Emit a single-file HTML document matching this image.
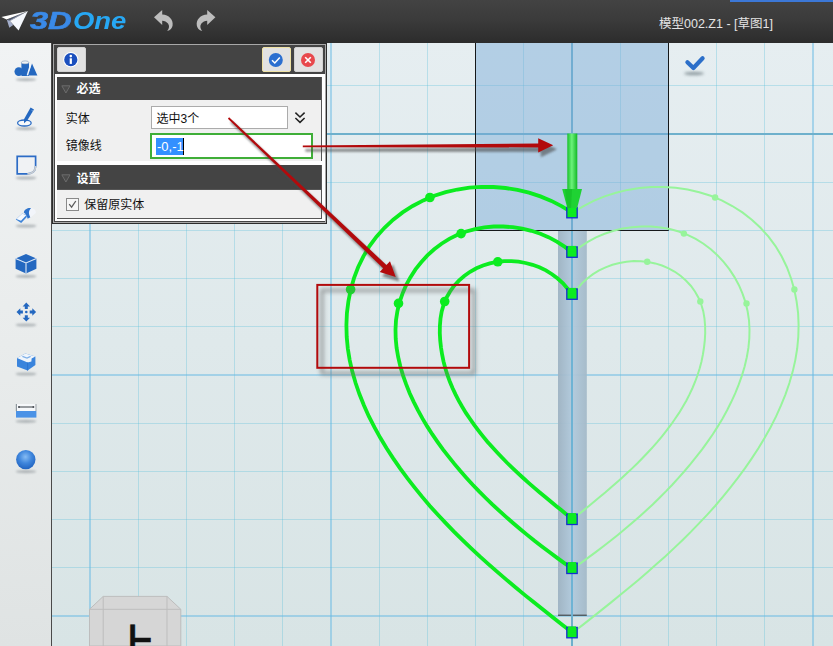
<!DOCTYPE html>
<html lang="zh-CN">
<head>
<meta charset="utf-8">
<title>模型002.Z1 - [草图1]</title>
<style>
html,body{margin:0;padding:0;}
body{width:833px;height:646px;overflow:hidden;position:relative;background:#e3ecef;font-family:"Liberation Sans","Noto Sans CJK SC",sans-serif;font-size:12px;color:#111;}
#hdr{position:absolute;left:0;top:0;width:833px;height:43px;background:linear-gradient(#434343 0,#3b3b3b 45%,#2c2c2c 100%);}
#hdr .bluebar{position:absolute;left:730px;top:0;width:103px;height:1.6px;background:#3c78d7;}
#title{position:absolute;left:659px;top:15px;font-size:12.5px;line-height:18px;color:#e4e4e4;white-space:nowrap;letter-spacing:0;}
#logo{position:absolute;left:0;top:0;font-family:"Liberation Sans",sans-serif;font-weight:bold;font-style:italic;font-size:24.5px;line-height:28px;white-space:nowrap;}
#logo span{position:absolute;top:6.5px;transform-origin:0 50%;display:block;}
#logo .a{color:#3a8ae8;left:29.5px;transform:scaleX(1.33);-webkit-text-stroke:0.6px #3a8ae8;}
#logo .b{color:#27a8f4;left:73px;transform:scaleX(1.12);}
#side{position:absolute;left:0;top:43px;width:51px;height:603px;background:linear-gradient(#f1f3f4,#e9ecec 50%,#dfe3e3);border-right:1px solid #4a4a4a;}
#panel{position:absolute;left:0;top:0;width:0;height:0;}
.pb{position:absolute;}
.tbtn{position:absolute;width:29px;height:25.3px;background:#e2e2e2;border-radius:2px;box-sizing:border-box;border:1px solid #d2d2d2;}
.lbl{position:absolute;font-size:12px;line-height:16px;color:#111;white-space:nowrap;}
.lbl.hd{color:#fff;font-weight:bold;}
</style>
</head>
<body>
<svg id="cv" width="833" height="646" viewBox="0 0 833 646" style="position:absolute;left:0;top:0">
<defs>
<linearGradient id="bg" x1="0" x2="0" y1="0" y2="1"><stop offset="0.06" stop-color="#e6eef1"/><stop offset="1" stop-color="#d8e4e5"/></linearGradient>
<linearGradient id="bar" x1="0" x2="1" y1="0" y2="0"><stop offset="0" stop-color="#9db2c2"/><stop offset="0.5" stop-color="#b0c9dc"/><stop offset="1" stop-color="#a3b9c8"/></linearGradient>
<linearGradient id="shaft" x1="0" x2="1" y1="0" y2="0"><stop offset="0" stop-color="#19c22c"/><stop offset="0.45" stop-color="#6cf27a"/><stop offset="1" stop-color="#12b825"/></linearGradient>
<filter id="sh" x="-20%" y="-20%" width="140%" height="140%"><feGaussianBlur stdDeviation="1.6"/></filter>
<filter id="sh4" x="-20%" y="-20%" width="140%" height="140%"><feGaussianBlur stdDeviation="2.1"/></filter>
<filter id="sh2" x="-50%" y="-100%" width="200%" height="300%"><feGaussianBlur stdDeviation="1.4"/></filter>
</defs>
<rect x="0" y="0" width="833" height="646" fill="url(#bg)"/>
<rect x="89" y="43" width="2" height="603" fill="rgba(104,186,228,0.50)"/>
<rect x="138" y="43" width="1" height="603" fill="rgba(92,192,220,0.33)"/>
<rect x="186" y="43" width="1" height="603" fill="rgba(92,192,220,0.33)"/>
<rect x="234" y="43" width="1" height="603" fill="rgba(92,192,220,0.33)"/>
<rect x="282" y="43" width="1" height="603" fill="rgba(92,192,220,0.33)"/>
<rect x="330" y="43" width="2" height="603" fill="rgba(104,186,228,0.50)"/>
<rect x="379" y="43" width="1" height="603" fill="rgba(92,192,220,0.33)"/>
<rect x="427" y="43" width="1" height="603" fill="rgba(92,192,220,0.33)"/>
<rect x="475" y="43" width="1" height="603" fill="rgba(92,192,220,0.33)"/>
<rect x="523" y="43" width="1" height="603" fill="rgba(92,192,220,0.33)"/>
<rect x="571" y="43" width="2" height="603" fill="#6eb0cc"/>
<rect x="620" y="43" width="1" height="603" fill="rgba(92,192,220,0.33)"/>
<rect x="668" y="43" width="1" height="603" fill="rgba(92,192,220,0.33)"/>
<rect x="716" y="43" width="1" height="603" fill="rgba(92,192,220,0.33)"/>
<rect x="764" y="43" width="1" height="603" fill="rgba(92,192,220,0.33)"/>
<rect x="812" y="43" width="2" height="603" fill="rgba(104,186,228,0.50)"/>
<rect x="52" y="85" width="781" height="1" fill="rgba(92,192,220,0.33)"/>
<rect x="52" y="133" width="781" height="2" fill="#6eb0cc"/>
<rect x="52" y="182" width="781" height="1" fill="rgba(92,192,220,0.33)"/>
<rect x="52" y="230" width="781" height="1" fill="rgba(92,192,220,0.33)"/>
<rect x="52" y="278" width="781" height="1" fill="rgba(92,192,220,0.33)"/>
<rect x="52" y="326" width="781" height="1" fill="rgba(92,192,220,0.33)"/>
<rect x="52" y="374" width="781" height="2" fill="rgba(104,186,228,0.50)"/>
<rect x="52" y="423" width="781" height="1" fill="rgba(92,192,220,0.33)"/>
<rect x="52" y="471" width="781" height="1" fill="rgba(92,192,220,0.33)"/>
<rect x="52" y="519" width="781" height="1" fill="rgba(92,192,220,0.33)"/>
<rect x="52" y="567" width="781" height="1" fill="rgba(92,192,220,0.33)"/>
<rect x="52" y="615" width="781" height="2" fill="rgba(104,186,228,0.50)"/>
<!-- selection box -->
<rect x="475" y="43" width="194" height="188" fill="rgba(120,170,215,0.46)"/>
<path d="M475.5 43 V230.5 H668.5 V43" fill="none" stroke="#15181a" stroke-width="1"/>
<!-- bar -->
<rect x="558" y="231" width="28.8" height="384.5" fill="url(#bar)" opacity="0.94"/>
<rect x="558" y="614.7" width="28.8" height="1" fill="#333"/>
<rect x="571.0" y="231" width="2" height="385" fill="#6ab2d4" opacity="0.95"/>
<g transform="translate(1,0)">
<path d="M572.0 212.5 L582.1 206.3 L592.6 200.9 L603.6 196.4 L615.0 192.7 L626.6 189.9 L638.5 188.0 L650.5 187.0 L662.6 186.9 L674.6 187.7 L686.6 189.5 L698.3 192.2 L709.7 195.8 L720.7 200.4 L731.3 206.0 L741.4 212.4 L750.8 219.7 L759.5 227.8 L767.5 236.6 L774.5 246.1 L780.6 256.3 L785.8 267.0 L790.0 278.2 L793.3 289.6 L795.6 301.4 L797.1 313.2 L797.6 325.0 L797.3 336.8 L796.2 348.5 L794.3 360.1 L791.7 371.6 L788.4 383.0 L784.5 394.3 L780.0 405.4 L775.1 416.4 L769.6 427.2 L763.7 437.8 L757.4 448.2 L750.8 458.4 L743.9 468.4 L736.7 478.2 L729.3 487.6 L721.8 496.9 L714.1 506.0 L706.1 514.8 L698.0 523.4 L689.8 531.9 L681.4 540.2 L672.8 548.4 L664.2 556.4 L655.3 564.3 L646.4 572.2 L637.4 579.9 L628.3 587.5 L619.1 595.1 L609.8 602.6 L600.4 610.1 L591.0 617.6 L581.5 625.1 L572.0 632.3" fill="none" stroke="#97f49b" stroke-width="2"/>
<path d="M572.0 252.5 L579.1 246.9 L586.8 241.8 L595.0 237.4 L603.6 233.8 L612.6 230.8 L621.8 228.6 L631.2 227.2 L640.7 226.5 L650.2 226.5 L659.6 227.4 L668.8 229.1 L677.8 231.5 L686.5 234.8 L694.7 238.9 L702.5 243.7 L709.8 249.3 L716.6 255.4 L722.8 262.2 L728.5 269.4 L733.5 277.1 L737.9 285.2 L741.5 293.6 L744.5 302.3 L746.6 311.2 L748.0 320.3 L748.5 329.5 L748.3 338.7 L747.4 347.9 L745.8 357.2 L743.7 366.3 L741.0 375.4 L737.8 384.4 L734.3 393.2 L730.3 401.8 L726.1 410.2 L721.6 418.4 L716.8 426.4 L711.8 434.2 L706.5 441.9 L701.1 449.4 L695.4 456.7 L689.6 463.9 L683.6 471.0 L677.5 477.9 L671.3 484.7 L664.9 491.4 L658.3 498.0 L651.7 504.4 L644.9 510.7 L638.0 516.9 L631.0 523.0 L623.9 529.0 L616.8 534.9 L609.5 540.8 L602.1 546.5 L594.7 552.1 L587.2 557.6 L579.7 563.1 L572.0 568.3" fill="none" stroke="#97f49b" stroke-width="2"/>
<path d="M572.0 294.5 L576.4 288.8 L581.0 283.3 L586.3 278.5 L592.0 274.2 L598.1 270.4 L604.6 267.3 L611.4 264.8 L618.4 263.0 L625.5 261.7 L632.7 261.1 L640.0 261.2 L647.1 262.0 L654.2 263.4 L661.0 265.5 L667.6 268.3 L673.9 271.8 L679.8 276.0 L685.1 280.7 L690.0 286.0 L694.1 291.7 L697.6 297.9 L700.3 304.5 L702.3 311.4 L703.5 318.5 L704.1 325.8 L704.2 333.1 L703.8 340.3 L703.0 347.5 L701.9 354.5 L700.5 361.4 L698.7 368.3 L696.6 375.0 L694.2 381.5 L691.5 388.0 L688.5 394.4 L685.3 400.7 L681.8 406.8 L678.1 412.9 L674.1 418.8 L670.0 424.7 L665.7 430.4 L661.2 436.1 L656.6 441.7 L651.8 447.1 L646.8 452.5 L641.8 457.8 L636.7 463.0 L631.4 468.1 L626.1 473.1 L620.8 478.0 L615.4 482.8 L609.9 487.6 L604.5 492.3 L599.0 496.8 L593.6 501.3 L588.2 505.8 L582.8 510.1 L577.5 514.4 L572.0 519.3" fill="none" stroke="#97f49b" stroke-width="2"/>
<circle cx="714.1" cy="197.5" r="3.2" fill="#97f49b"/>
<circle cx="793.4" cy="289.5" r="3.2" fill="#97f49b"/>
<circle cx="682.9" cy="233.6" r="3.2" fill="#97f49b"/>
<circle cx="745.5" cy="303.4" r="3.2" fill="#97f49b"/>
<circle cx="646.2" cy="261.8" r="3.2" fill="#97f49b"/>
<circle cx="699.3" cy="301.5" r="3.2" fill="#97f49b"/>
</g>
<path d="M572.0 212.5 L561.9 206.3 L551.4 200.9 L540.4 196.4 L529.0 192.7 L517.4 189.9 L505.5 188.0 L493.5 187.0 L481.4 186.9 L469.4 187.7 L457.4 189.5 L445.7 192.2 L434.3 195.8 L423.3 200.4 L412.7 206.0 L402.6 212.4 L393.2 219.7 L384.5 227.8 L376.5 236.6 L369.5 246.1 L363.4 256.3 L358.2 267.0 L354.0 278.2 L350.7 289.6 L348.4 301.4 L346.9 313.2 L346.4 325.0 L346.7 336.8 L347.8 348.5 L349.7 360.1 L352.3 371.6 L355.6 383.0 L359.5 394.3 L364.0 405.4 L368.9 416.4 L374.4 427.2 L380.3 437.8 L386.6 448.2 L393.2 458.4 L400.1 468.4 L407.3 478.2 L414.7 487.6 L422.2 496.9 L429.9 506.0 L437.9 514.8 L446.0 523.4 L454.2 531.9 L462.6 540.2 L471.2 548.4 L479.8 556.4 L488.7 564.3 L497.6 572.2 L506.6 579.9 L515.7 587.5 L524.9 595.1 L534.2 602.6 L543.6 610.1 L553.0 617.6 L562.5 625.1 L572.0 632.3" fill="none" stroke="#0cec20" stroke-width="3.8" stroke-linecap="round"/>
<path d="M572.0 252.5 L564.9 246.9 L557.2 241.8 L549.0 237.4 L540.4 233.8 L531.4 230.8 L522.2 228.6 L512.8 227.2 L503.3 226.5 L493.8 226.5 L484.4 227.4 L475.2 229.1 L466.2 231.5 L457.5 234.8 L449.3 238.9 L441.5 243.7 L434.2 249.3 L427.4 255.4 L421.2 262.2 L415.5 269.4 L410.5 277.1 L406.1 285.2 L402.5 293.6 L399.5 302.3 L397.4 311.2 L396.0 320.3 L395.5 329.5 L395.7 338.7 L396.6 347.9 L398.2 357.2 L400.3 366.3 L403.0 375.4 L406.2 384.4 L409.7 393.2 L413.7 401.8 L417.9 410.2 L422.4 418.4 L427.2 426.4 L432.2 434.2 L437.5 441.9 L442.9 449.4 L448.6 456.7 L454.4 463.9 L460.4 471.0 L466.5 477.9 L472.7 484.7 L479.1 491.4 L485.7 498.0 L492.3 504.4 L499.1 510.7 L506.0 516.9 L513.0 523.0 L520.1 529.0 L527.2 534.9 L534.5 540.8 L541.9 546.5 L549.3 552.1 L556.8 557.6 L564.3 563.1 L572.0 568.3" fill="none" stroke="#0cec20" stroke-width="3.8" stroke-linecap="round"/>
<path d="M572.0 294.5 L567.6 288.8 L563.0 283.3 L557.7 278.5 L552.0 274.2 L545.9 270.4 L539.4 267.3 L532.6 264.8 L525.6 263.0 L518.5 261.7 L511.3 261.1 L504.0 261.2 L496.9 262.0 L489.8 263.4 L483.0 265.5 L476.4 268.3 L470.1 271.8 L464.2 276.0 L458.9 280.7 L454.0 286.0 L449.9 291.7 L446.4 297.9 L443.7 304.5 L441.7 311.4 L440.5 318.5 L439.9 325.8 L439.8 333.1 L440.2 340.3 L441.0 347.5 L442.1 354.5 L443.5 361.4 L445.3 368.3 L447.4 375.0 L449.8 381.5 L452.5 388.0 L455.5 394.4 L458.7 400.7 L462.2 406.8 L465.9 412.9 L469.9 418.8 L474.0 424.7 L478.3 430.4 L482.8 436.1 L487.4 441.7 L492.2 447.1 L497.2 452.5 L502.2 457.8 L507.3 463.0 L512.6 468.1 L517.9 473.1 L523.2 478.0 L528.6 482.8 L534.1 487.6 L539.5 492.3 L545.0 496.8 L550.4 501.3 L555.8 505.8 L561.2 510.1 L566.5 514.4 L572.0 519.3" fill="none" stroke="#0cec20" stroke-width="3.8" stroke-linecap="round"/>
<circle cx="429.9" cy="197.5" r="4.8" fill="#0cec20"/>
<circle cx="350.6" cy="289.5" r="4.8" fill="#0cec20"/>
<circle cx="461.1" cy="233.6" r="4.8" fill="#0cec20"/>
<circle cx="398.5" cy="303.4" r="4.8" fill="#0cec20"/>
<circle cx="497.8" cy="261.8" r="4.8" fill="#0cec20"/>
<circle cx="444.7" cy="301.5" r="4.8" fill="#0cec20"/>
<rect x="566.8" y="207.4" width="10.4" height="10.4" fill="#0cec20" stroke="#1530d0" stroke-width="1.3"/><rect x="568.0" y="206.4" width="8" height="6" fill="#0cec20"/>
<rect x="566.8" y="246.9" width="10.4" height="10.4" fill="#0cec20" stroke="#1530d0" stroke-width="1.3"/><rect x="568.0" y="245.9" width="8" height="6" fill="#0cec20"/>
<rect x="566.8" y="288.9" width="10.4" height="10.4" fill="#0cec20" stroke="#1530d0" stroke-width="1.3"/><rect x="568.0" y="287.9" width="8" height="6" fill="#0cec20"/>
<rect x="566.8" y="514.1" width="10.4" height="10.4" fill="#0cec20" stroke="#1530d0" stroke-width="1.3"/><rect x="568.0" y="513.1" width="8" height="6" fill="#0cec20"/>
<rect x="566.8" y="563.1" width="10.4" height="10.4" fill="#0cec20" stroke="#1530d0" stroke-width="1.3"/><rect x="568.0" y="562.1" width="8" height="6" fill="#0cec20"/>
<rect x="566.8" y="627.4" width="10.4" height="10.4" fill="#0cec20" stroke="#1530d0" stroke-width="1.3"/><rect x="568.0" y="626.4" width="8" height="6" fill="#0cec20"/>

<!-- green arrow -->
<rect x="567.3" y="133.5" width="10" height="56" fill="url(#shaft)"/>
<path d="M562.2 189 L582 189 L577.2 208 L567.3 208 Z" fill="#1fd233"/>
<path d="M565 189 L572 189 L571 208 L567.3 208 Z" fill="#12b825" opacity="0.55"/>

<!-- red rect -->
<rect x="322" y="290.4" width="152" height="83" fill="none" stroke="#6a6a6a" stroke-width="3.4" opacity="0.6" filter="url(#sh4)"/>
<rect x="317.3" y="284.9" width="151.8" height="82.9" fill="none" stroke="#b20a0c" stroke-width="2"/>
<!-- blue check -->
<ellipse cx="694" cy="73.5" rx="10" ry="1.8" fill="#7d8a90" filter="url(#sh2)" opacity="0.8"/>
<path d="M687.4 62.2 L693.4 68 L702.6 58.2" fill="none" stroke="#2c6fc9" stroke-width="4.2" stroke-linecap="round" stroke-linejoin="round"/>
<!-- view cube -->
<path d="M89.5 646 V609.3 L103.2 596.4 H167 L180.8 609.3 V646 Z" fill="#d6d6d6" stroke="#bdbdbd" stroke-width="1"/>
<path d="M89.5 609.3 H180.8 M103.2 596.4 V646 M167 596.4 V646" fill="none" stroke="#bdbdbd" stroke-width="1"/>
</svg>
<div id="hdr">
  <div class="bluebar"></div>
  <svg width="30" height="42" style="position:absolute;left:0;top:0" viewBox="0 0 30 42">
    <path d="M7 20.2 L26 11.8 L10 20.9 L13.2 25 L9.3 27.8 Z" fill="#a3aecb"/>
    <path d="M7.6 19.7 L24 12.2 L9 20.7 Z" fill="#4b5468"/>
    <path d="M1.4 17.1 L27.9 10.9 L6.6 19.4 Z" fill="#ffffff"/>
    <path d="M10 20.9 L27.9 10.9 L18.6 30.6 Z" fill="#f5f8fd"/>
  </svg>
  <div id="logo"><span class="a">3D</span><span class="b">One</span></div>
  <svg width="80" height="42" style="position:absolute;left:145px;top:0" viewBox="145 0 80 42">
    <path d="M154 17.2 L162.2 10 L162.2 14.6 C169 15 173.4 19.6 172.6 25.4 C172.2 28 170.4 30 167.2 31 C169.4 28.6 169.6 25.6 168 23.6 C166.6 21.8 164.6 21 162.2 20.8 L162.2 25 Z" fill="#bdbdbd"/>
    <path d="M215.4 17.2 L207.2 10 L207.2 14.6 C200.4 15 196 19.6 196.8 25.4 C197.2 28 199 30 202.2 31 C200 28.6 199.8 25.6 201.4 23.6 C202.8 21.8 204.8 21 207.2 20.8 L207.2 25 Z" fill="#bdbdbd"/>
  </svg>
  <div id="title">模型002.Z1 - [草图1]</div>
</div>
<div id="side">
<svg width="51" height="603" viewBox="0 43 51 603" style="position:absolute;left:0;top:0">
<defs>
<filter id="ib" x="-30%" y="-150%" width="160%" height="400%"><feGaussianBlur stdDeviation="1.3"/></filter>
<radialGradient id="sph" cx="0.48" cy="0.36" r="0.6"><stop offset="0" stop-color="#86bcf4"/><stop offset="0.55" stop-color="#3f86dc"/><stop offset="1" stop-color="#2568c4"/></radialGradient>
</defs>
<g fill="#8d9499" filter="url(#ib)" opacity="0.6">
<ellipse cx="26" cy="79.6" rx="10.5" ry="1.6"/>
<ellipse cx="26" cy="128.6" rx="10.5" ry="1.6"/>
<ellipse cx="26" cy="178" rx="10.5" ry="1.6"/>
<ellipse cx="26" cy="226" rx="10.5" ry="1.6"/>
<ellipse cx="26" cy="276.4" rx="10.5" ry="1.6"/>
<ellipse cx="26" cy="325" rx="10.5" ry="1.6"/>
<ellipse cx="26" cy="374" rx="10.5" ry="1.6"/>
<ellipse cx="26" cy="421.4" rx="10.5" ry="1.6"/>
<ellipse cx="26" cy="471.6" rx="10.5" ry="1.6"/>
</g>
<!-- 1 shapes -->
<g>
<circle cx="18.8" cy="71.6" r="4.3" fill="#2468c0"/>
<path d="M21.4 62.6 V76 H29 V62.6 Z" fill="#2468c0"/>
<ellipse cx="25.1" cy="62.4" rx="3.7" ry="1.5" fill="#eef2f6" stroke="#7f97b4" stroke-width="0.6"/>
<path d="M32 63.6 L37.4 75.6 H27.6 Z" fill="#2468c0"/>
<path d="M30.6 64.4 L27.4 75.4" stroke="#f2f6fb" stroke-width="1.5" fill="none"/>
</g>
<!-- 2 pen -->
<g>
<ellipse cx="24.4" cy="123" rx="6.8" ry="3" fill="#f7f9fb" stroke="#2a6cc4" stroke-width="1.3"/>
<path d="M30.6 107.6 L34 109.6 L27.2 120.6 L24 123.2 L24 119.2 Z" fill="#2468c0"/>
<path d="M31.6 110.4 L33 111.2" stroke="#9cc0ea" stroke-width="0.8"/>
</g>
<!-- 3 square -->
<g>
<path d="M17.2 156.4 H35.6 V166 Q35.4 173.6 27.4 173.8 H17.2 Z" fill="#f0f2f4" stroke="#2c6cc6" stroke-width="1.7"/>
<path d="M35.6 166 Q35.4 173.6 27.4 173.8" fill="none" stroke="#c8ccd0" stroke-width="1.8"/>
</g>
<!-- 4 eraser-ish -->
<g>
<path d="M15.8 219.4 L22.2 213.4 L26.6 215 L26.8 217 L21.2 223 Z" fill="#3d83d8"/>
<path d="M16.4 219 L22.2 213.6 L26.2 215.2 L21 220.8 Z" fill="#f6f9fd"/>
<path d="M23.8 212.4 C24.4 209.4 28 207.6 31 208.2 L30.4 217.2 L27.6 218.8 C27.2 216 26 214 23.8 212.4 Z" fill="#2f74cc"/>
<path d="M31 208.2 C34 208 36 210.2 35.8 213 L30.6 217.4 C28.2 214.4 28.4 210.4 31 208.2 Z" fill="#f2f5fa"/>
</g>
<!-- 5 cube -->
<g>
<path d="M26 254 L36.4 258.6 V268.8 L26 273.6 L15.6 268.8 V258.6 Z" fill="#2468c0"/>
<path d="M15.6 258.6 L26 263 L36.4 258.6 M26 263 V273.6" fill="none" stroke="#dfe9f6" stroke-width="1.1"/>
</g>
<!-- 6 move -->
<g fill="#2468c0">
<path d="M26.3 302.6 L30 306.4 H27.8 V309 H24.8 V306.4 H22.6 Z"/>
<path d="M26.3 321.6 L30 317.8 H27.8 V315.2 H24.8 V317.8 H22.6 Z"/>
<path d="M16.5 312 L20.3 308.3 V310.5 H22.9 V313.5 H20.3 V315.7 Z"/>
<path d="M36.1 312 L32.3 308.3 V310.5 H29.7 V313.5 H32.3 V315.7 Z"/>
<circle cx="26.3" cy="312" r="1.3"/>
</g>
<!-- 7 cube cut -->
<g>
<path d="M17 358 L25.4 353.6 L35.4 356.6 L35.4 365 L27.6 370.6 L17 366.6 Z" fill="#3a84dc"/>
<path d="M17 358 L25.4 353.6 L35.4 356.6 L31.6 358.6 L31.4 361.6 L27.6 362.4 Z" fill="#f0f5fb"/>
<path d="M22.4 356.4 L27 358 L30.6 356.4" fill="none" stroke="#7fb0e8" stroke-width="1.2"/>
<path d="M27.6 362.4 V370.6" stroke="#2a70cc" stroke-width="0.8"/>
</g>
<!-- 8 measure -->
<g>
<rect x="16" y="404" width="20.4" height="7.4" fill="#f6f8fa"/>
<rect x="16" y="411" width="20.4" height="6.6" fill="#4a92e6"/>
<rect x="15.8" y="404" width="1.2" height="7" fill="#8e969c"/>
<rect x="35.4" y="404" width="1.2" height="7" fill="#a6adb2"/>
<path d="M18.6 407 H33.6" stroke="#4a4f55" stroke-width="1.1"/>
<circle cx="19" cy="407" r="1" fill="#4a4f55"/><circle cx="33.4" cy="407" r="1" fill="#4a4f55"/>
</g>
<!-- 9 sphere -->
<circle cx="25.8" cy="459.6" r="9.7" fill="url(#sph)"/>
</svg>

</div>
<div id="panel">
  <div class="pb" style="left:52px;top:42px;width:275px;height:182px;background:#2c2c2c"></div>
  <div class="pb" style="left:53px;top:44px;width:273px;height:179px;background:#a8a8a8"></div>
  <div class="pb" style="left:54px;top:45px;width:271px;height:177px;background:#444"></div>
  <div class="tbtn" style="left:56.5px;top:47px"></div>
  <div class="tbtn" style="left:261.5px;top:47px;border-color:#efe2a4;"></div>
  <div class="tbtn" style="left:293.5px;top:47px"></div>
  <svg width="275" height="34" style="position:absolute;left:52px;top:42px" viewBox="52 42 275 34">
    <circle cx="70.8" cy="59.7" r="7.6" fill="#fff"/><circle cx="70.8" cy="59.7" r="6.6" fill="#1b4fbe"/>
    <circle cx="70.8" cy="56.1" r="1.3" fill="#fff"/><rect x="69.7" y="58.3" width="2.2" height="5.6" fill="#fff"/>
    <circle cx="275.8" cy="60" r="7" fill="#2b6fd0"/>
    <path d="M272 60.2 L274.8 63 L279.8 57.6" fill="none" stroke="#fff" stroke-width="1.5"/>
    <circle cx="308" cy="60" r="7" fill="#e8484c"/>
    <path d="M305.2 57.2 L310.8 62.8 M310.8 57.2 L305.2 62.8" fill="none" stroke="#fff" stroke-width="1.6"/>
  </svg>
  <div class="pb" style="left:55px;top:74.3px;width:269.5px;height:147px;background:#fff"></div>
  <div class="pb" style="left:57px;top:76.5px;width:265px;height:142.8px;background:#555"></div>
  <div class="pb" style="left:57px;top:76.5px;width:264.2px;height:23.6px;background:#444"></div>
  <div class="pb" style="left:57px;top:100.1px;width:264.2px;height:61.2px;background:#f0f0f0"></div>
  <div class="pb" style="left:57px;top:161.3px;width:265px;height:3.8px;background:#fff"></div>
  <div class="pb" style="left:57px;top:165.1px;width:264.2px;height:24.4px;background:#444"></div>
  <div class="pb" style="left:57px;top:189.5px;width:264.2px;height:28.9px;background:#f0f0f0"></div>
  <svg width="10" height="9" style="position:absolute;left:61.4px;top:85.4px" viewBox="0 0 10 9"><path d="M0.8 0.8 H9 L4.9 8 Z" fill="#4c4c4c" stroke="#6c6c6c" stroke-width="1"/></svg>
  <svg width="10" height="9" style="position:absolute;left:61.4px;top:174.2px" viewBox="0 0 10 9"><path d="M0.8 0.8 H9 L4.9 8 Z" fill="#4c4c4c" stroke="#6c6c6c" stroke-width="1"/></svg>
  <div class="lbl hd" style="left:76.6px;top:81.2px">必选</div>
  <div class="lbl hd" style="left:76.6px;top:170.6px">设置</div>
  <div class="lbl" style="left:65.8px;top:110.8px">实体</div>
  <div class="pb" style="left:151.4px;top:106.4px;width:136.6px;height:22.6px;box-sizing:border-box;border:1px solid #ababab;background:#fff;"></div>
  <div class="lbl" style="left:156.5px;top:110.8px">选中3个</div>
  <svg width="12" height="14" style="position:absolute;left:294.4px;top:111.4px" viewBox="0 0 12 14"><path d="M1.4 1.6 L6 6 L10.6 1.6 M1.4 7 L6 11.4 L10.6 7" fill="none" stroke="#222" stroke-width="1.5"/></svg>
  <div class="lbl" style="left:65.8px;top:138.2px">镜像线</div>
  <div class="pb" style="left:150px;top:132.6px;width:163.2px;height:26px;box-sizing:border-box;border:2px solid #3fae38;background:#fff;"></div>
  <div class="pb" style="left:156px;top:138px;width:27.3px;height:17px;background:#3390ff;border-right:1px solid #000"></div>
  <div class="lbl" style="left:157px;top:138.5px;color:#fff;font-size:13px;">-0,-1</div>
  <div class="pb" style="left:66.2px;top:198.4px;width:12.6px;height:12.4px;box-sizing:border-box;border:1px solid #8a8a8a;background:#f6f6f6;"></div>
  <svg width="13" height="13" style="position:absolute;left:66.2px;top:198.4px" viewBox="0 0 13 13"><path d="M3.2 6.2 L5.6 9.2 L9.8 3" fill="none" stroke="#5c5c5c" stroke-width="1.3"/></svg>
  <div class="lbl" style="left:84.2px;top:196.6px">保留原实体</div>
</div>
<div id="up" style="position:absolute;left:100px;top:600px;width:70px;height:46px;overflow:hidden;font-family:'Liberation Sans','Noto Sans CJK SC',sans-serif;font-weight:500;font-size:43px;line-height:43px;color:#111;"><span style="position:absolute;left:12.6px;top:24.6px;-webkit-text-stroke:0.5px #111">上</span></div>
<svg width="833" height="646" viewBox="0 0 833 646" style="position:absolute;left:0;top:0;pointer-events:none">
<defs><filter id="sh3" x="-20%" y="-20%" width="140%" height="140%"><feGaussianBlur stdDeviation="1.2"/></filter></defs>
<!-- red arrows -->
<g filter="url(#sh3)" opacity="0.6" transform="translate(3,4)">
<path d="M227.9 118.7 L383.2 268.3 L379.7 272.1 L395.7 277.0 L390.0 261.2 L386.4 265.0 L229.1 117.3 Z" fill="#4a4a4a" stroke="#4a4a4a" stroke-width="1"/>
<path d="M302.8 147.2 L538.2 147.4 L538.2 152.6 L553.2 145.3 L538.2 138.2 L538.2 143.4 L302.8 145.4 Z" fill="#4a4a4a" stroke="#4a4a4a" stroke-width="1"/>
</g>
<path d="M227.9 118.7 L383.2 268.3 L379.7 272.1 L395.7 277.0 L390.0 261.2 L386.4 265.0 L229.1 117.3 Z" fill="#b20a0c"/>
<path d="M302.8 147.2 L538.2 147.4 L538.2 152.6 L553.2 145.3 L538.2 138.2 L538.2 143.4 L302.8 145.4 Z" fill="#b20a0c"/>
</svg>
</body>
</html>
